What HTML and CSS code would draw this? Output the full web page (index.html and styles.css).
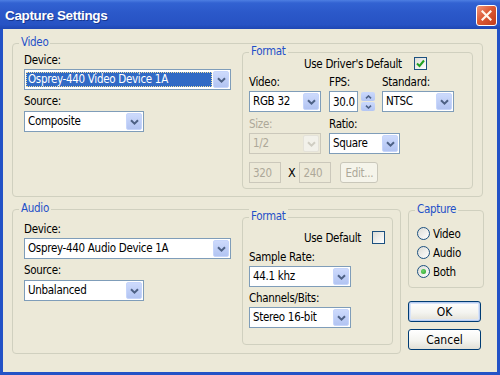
FILE: index.html
```html
<!DOCTYPE html>
<html>
<head>
<meta charset="utf-8">
<link rel="stylesheet" href="styles.css">
</head>
<body>
<div class="window">
  <div class="titlebar">
    <span class="title">Capture Settings</span>
    <span class="close"><svg width="11" height="11" viewBox="0 0 11 11"><path d="M1.5 1.5 L9.5 9.5 M9.5 1.5 L1.5 9.5" stroke="#fff6ec" stroke-width="2.2" stroke-linecap="square"/></svg></span>
  </div>
  <div class="client">
    <section class="group video-group">
      <span class="group-title">Video</span>
      <div class="source-col">
        <span class="lbl">Device:</span>
        <div class="combo w207 mt2"><span class="val sel">Osprey-440 Video Device 1A</span><span class="drop"><svg width="9" height="6" viewBox="0 0 9 6"><path d="M1 1.2 L4.5 4.6 L8 1.2" fill="none" stroke="#4d6185" stroke-width="2"/></svg></span></div>
        <span class="lbl mt4">Source:</span>
        <div class="combo w120 mt3"><span class="val">Composite</span><span class="drop"><svg width="9" height="6" viewBox="0 0 9 6"><path d="M1 1.2 L4.5 4.6 L8 1.2" fill="none" stroke="#4d6185" stroke-width="2"/></svg></span></div>
      </div>
      <section class="group vfmt">
        <span class="group-title">Format</span>
        <div class="default-row"><span>Use Driver's Default</span><span class="check"><svg width="11" height="11" viewBox="0 0 11 11"><path d="M2 5.5 L4.5 8 L9 2.5" fill="none" stroke="#21a121" stroke-width="2"/></svg></span></div>
        <div class="fmt-grid">
          <span class="lbl">Video:</span>
          <span class="lbl">FPS:</span>
          <span class="lbl">Standard:</span>
          <div class="combo w72"><span class="val">RGB 32</span><span class="drop"><svg width="9" height="6" viewBox="0 0 9 6"><path d="M1 1.2 L4.5 4.6 L8 1.2" fill="none" stroke="#4d6185" stroke-width="2"/></svg></span></div>
          <div class="fps">
            <div class="edit w29">30.0</div>
            <div class="spin">
              <span class="sb"><svg width="7" height="4" viewBox="0 0 7 4"><path d="M1 3.4 L3.5 1 L6 3.4" fill="none" stroke="#4d6185" stroke-width="1.6"/></svg></span>
              <span class="sb"><svg width="7" height="4" viewBox="0 0 7 4"><path d="M1 0.6 L3.5 3 L6 0.6" fill="none" stroke="#4d6185" stroke-width="1.6"/></svg></span>
            </div>
          </div>
          <div class="combo w72"><span class="val">NTSC</span><span class="drop"><svg width="9" height="6" viewBox="0 0 9 6"><path d="M1 1.2 L4.5 4.6 L8 1.2" fill="none" stroke="#4d6185" stroke-width="2"/></svg></span></div>
          <span class="lbl dis">Size:</span>
          <span class="lbl span2">Ratio:</span>
          <div class="combo w72 disabled"><span class="val">1/2</span><span class="drop"><svg width="9" height="6" viewBox="0 0 9 6"><path d="M1 1.2 L4.5 4.6 L8 1.2" fill="none" stroke="#cfcdc2" stroke-width="2"/></svg></span></div>
          <div class="combo w71 span2"><span class="val">Square</span><span class="drop"><svg width="9" height="6" viewBox="0 0 9 6"><path d="M1 1.2 L4.5 4.6 L8 1.2" fill="none" stroke="#4d6185" stroke-width="2"/></svg></span></div>
        </div>
        <div class="size-row">
          <div class="edit w32 disabled">320</div>
          <span class="x">X</span>
          <div class="edit w32 disabled">240</div>
          <span class="btn-dis">Edit...</span>
        </div>
      </section>
    </section>

    <div class="bottom-row">
      <section class="group audio-group">
        <span class="group-title">Audio</span>
        <div class="source-col">
          <span class="lbl">Device:</span>
          <div class="combo w207 mt2"><span class="val">Osprey-440 Audio Device 1A</span><span class="drop"><svg width="9" height="6" viewBox="0 0 9 6"><path d="M1 1.2 L4.5 4.6 L8 1.2" fill="none" stroke="#4d6185" stroke-width="2"/></svg></span></div>
          <span class="lbl mt4">Source:</span>
          <div class="combo w120 mt3"><span class="val">Unbalanced</span><span class="drop"><svg width="9" height="6" viewBox="0 0 9 6"><path d="M1 1.2 L4.5 4.6 L8 1.2" fill="none" stroke="#4d6185" stroke-width="2"/></svg></span></div>
        </div>
        <section class="group afmt">
          <span class="group-title">Format</span>
          <div class="default-row gap11"><span>Use Default</span><span class="check"></span></div>
          <span class="lbl mt5">Sample Rate:</span>
          <div class="combo w102 mt2"><span class="val">44.1 khz</span><span class="drop"><svg width="9" height="6" viewBox="0 0 9 6"><path d="M1 1.2 L4.5 4.6 L8 1.2" fill="none" stroke="#4d6185" stroke-width="2"/></svg></span></div>
          <span class="lbl mt4">Channels/Bits:</span>
          <div class="combo w102 mt2"><span class="val">Stereo 16-bit</span><span class="drop"><svg width="9" height="6" viewBox="0 0 9 6"><path d="M1 1.2 L4.5 4.6 L8 1.2" fill="none" stroke="#4d6185" stroke-width="2"/></svg></span></div>
        </section>
      </section>

      <div class="side-col">
        <section class="group capture-group">
          <span class="group-title">Capture</span>
          <div class="radio-row"><span class="radio"></span><span>Video</span></div>
          <div class="radio-row"><span class="radio"></span><span>Audio</span></div>
          <div class="radio-row"><span class="radio on"></span><span>Both</span></div>
        </section>
        <button class="btn default ok">OK</button>
        <button class="btn cancel">Cancel</button>
      </div>
    </div>
  </div>
</div>
</body>
</html>
```
FILE: styles.css
```css
* { box-sizing: border-box; }
body {
  margin: 0;
  background: #ffffff;
  font-family: "DejaVu Sans Condensed", "DejaVu Sans", sans-serif;
  font-stretch: condensed;
  font-size: 11.5px;
  letter-spacing: -0.3px;
  color: #000;
}
.window { width: 500px; height: 375px; display: flex; flex-direction: column; }

.titlebar {
  height: 29px; flex: none;
  display: flex; align-items: flex-start; justify-content: space-between;
  padding: 0 3px 0 5px;
  background: linear-gradient(#4d7ee2 0, #3262d2 3px, #2b58c9 45%, #2753c4 85%, #1f47b3 100%);
}
.title {
  font-family: "Liberation Sans", Arial, sans-serif;
  font-stretch: normal;
  font-weight: bold; font-size: 13.5px; line-height: 16px;
  color: #fff; margin-top: 8px; letter-spacing: -0.35px;
  text-shadow: 1px 1px 0 #16368f;
}
.close {
  width: 21px; height: 21px; margin-top: 5px;
  border: 1px solid #fff; border-radius: 3px;
  background: linear-gradient(135deg, #f0957a 0%, #dc5a35 45%, #c23c1b 100%);
  display: flex; align-items: center; justify-content: center;
}

.client {
  flex: 1; background: #ece9d8;
  border: 3px solid #2352c6; border-top: 0;
  padding: 14px 14px 0 9px;
}

.group { position: relative; border: 1px solid #d0d0bf; border-radius: 4px; flex: none; }
.group-title {
  position: absolute; top: -9px; left: 6px; padding: 0 2px;
  line-height: 14px; color: #1f50c8; background: #ece9d8; white-space: nowrap;
}

.lbl { line-height: 14px; white-space: nowrap; }
.lbl.dis { color: #aca899; }
.mt2 { margin-top: 2px; }
.mt3 { margin-top: 3px; }
.mt4 { margin-top: 4px; }
.mt5 { margin-top: 5px; }

.video-group { height: 154px; display: flex; align-items: flex-start; padding: 8px 9px 0 11px; }
.source-col { width: 207px; margin-right: 11px; margin-top: 1px; display: flex; flex-direction: column; align-items: flex-start; flex: none; }

.vfmt { width: 231px; height: 137px; padding: 3px 0 0 6px; }
.default-row { display: flex; align-items: center; height: 15px; padding-left: 55px; gap: 12px; white-space: nowrap; }
.default-row.gap11 { gap: 11px; }

.fmt-grid {
  margin-top: 4px;
  display: grid;
  grid-template-columns: 80px 53px 72px;
  grid-template-rows: 16px 26px 16px 21px;
  align-items: start; justify-items: start;
}
.span2 { grid-column: 2 / span 2; }
.fps { display: flex; align-items: center; height: 21px; }
.spin { display: flex; flex-direction: column; gap: 1px; margin-left: 3px; }
.sb {
  width: 14px; height: 9px; border-radius: 2px;
  background: linear-gradient(#cbd9fc, #b3c5f3);
  display: flex; align-items: center; justify-content: center;
}

.size-row { display: flex; align-items: center; height: 21px; margin-top: 8px; }
.x { margin: 0 4px 0 7px; color: #000; font-size: 12.5px; }
.btn-dis {
  width: 38px; height: 21px; margin-left: 9px;
  border: 1px solid #c9c7ba; border-radius: 3px; background: #f5f4ea;
  color: #aca899; display: flex; align-items: center; justify-content: center;
}

.combo {
  display: flex; align-items: center; height: 21px; flex: none;
  border: 1px solid #7f9db9; background: #fff;
}
.combo .val { flex: 1; padding-left: 3px; white-space: nowrap; overflow: hidden; line-height: 15px; }
.combo .val.sel {
  align-self: stretch; margin: 2px 1px 2px 1px; padding-left: 2px;
  background: #316ac5; color: #fff;
  outline: 1px dotted #efdf9f; outline-offset: -1px;
  display: flex; align-items: center;
}
.drop {
  width: 16px; height: 17px; margin-right: 1px; flex: none;
  border-radius: 2px; border: 1px solid #c6d5fb;
  background: linear-gradient(#cddafc, #b2c4f2);
  display: flex; align-items: center; justify-content: center;
}
.combo.disabled { border-color: #cbc8bb; background: #ece9d8; color: #aca899; }
.combo.disabled .drop { background: #f2f1ea; border-color: #e4e2d9; }

.w207 { width: 207px; }
.w120 { width: 120px; }
.w102 { width: 102px; }
.w72 { width: 72px; }
.w71 { width: 71px; }
.w32 { width: 32px; }
.w29 { width: 29px; }

.edit {
  height: 21px; border: 1px solid #7f9db9; background: #fff;
  padding-left: 3px; display: flex; align-items: center; flex: none;
}
.edit.disabled { border-color: #cbc8bb; background: #ece9d8; color: #aca899; }

.check {
  width: 13px; height: 13px; flex: none;
  border: 1px solid #1c5180;
  background: linear-gradient(135deg, #dcdcd6, #ffffff);
  display: flex; align-items: center; justify-content: center;
}

.bottom-row { display: flex; align-items: flex-start; gap: 7px; margin-top: 12px; }
.audio-group { width: 389px; height: 145px; display: flex; align-items: flex-start; padding: 7px 0 0 11px; }
.audio-group .source-col { margin-top: 5px; }
.afmt { width: 151px; height: 128px; padding: 12px 0 0 6px; display: flex; flex-direction: column; align-items: flex-start; }

.side-col { width: 76px; margin-top: 1px; display: flex; flex-direction: column; align-items: flex-start; }
.capture-group { width: 76px; height: 78px; padding: 13px 0 0 8px; }
.radio-row { display: flex; align-items: center; gap: 3px; height: 19px; }
.radio {
  width: 13px; height: 13px; border-radius: 50%; flex: none;
  border: 1px solid #1c5180;
  background: linear-gradient(135deg, #dcdcd6, #ffffff);
  display: flex; align-items: center; justify-content: center;
}
.radio.on::after {
  content: ""; width: 5px; height: 5px; border-radius: 50%;
  background: radial-gradient(circle at 40% 40%, #6fd66f, #21a121);
}

.btn {
  width: 73px; height: 21px; padding: 0;
  font: inherit; font-size: 12px; color: #000; text-align: center;
  border: 1px solid #003c74; border-radius: 3px;
  background: linear-gradient(#ffffff, #f4f4f0 55%, #e2e0d6 100%);
}
.btn.default { box-shadow: inset 0 0 0 1px #b6cbf0, inset 0 0 0 2px #d9e4f8; }
.ok { margin-top: 13px; }
.cancel { margin-top: 7px; }
```
